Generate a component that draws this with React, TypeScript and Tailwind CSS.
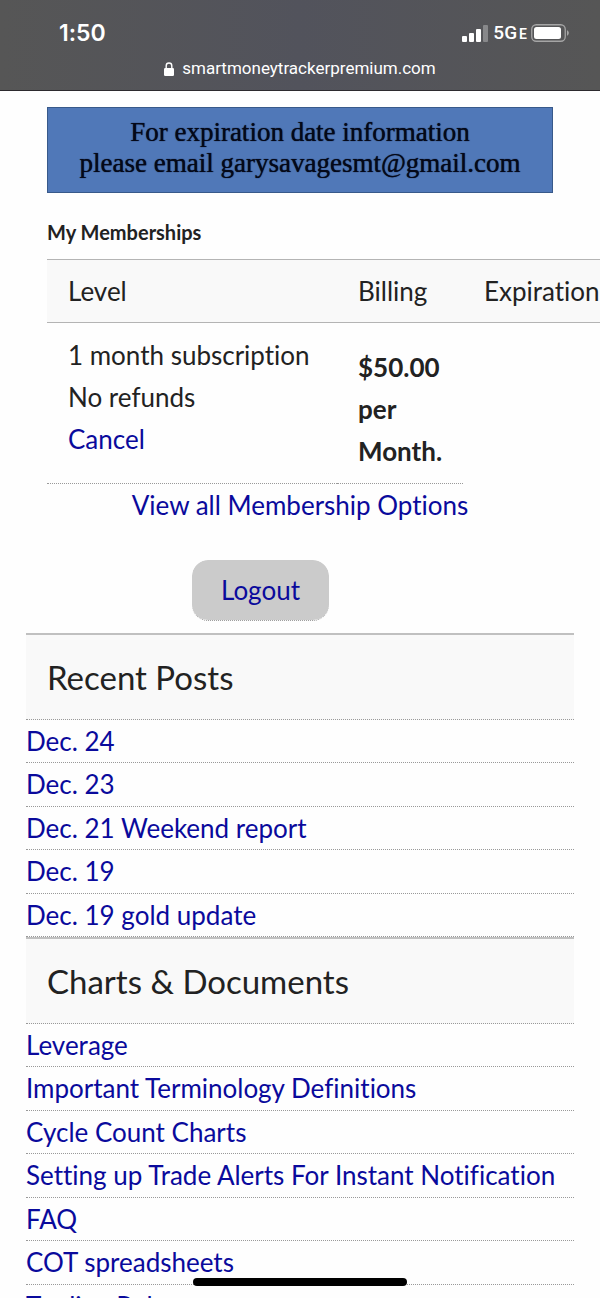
const posts = ['Dec. 24', 'Dec. 23', 'Dec. 21 Weekend report', 'Dec. 19', 'Dec. 19 gold update'];

const documents = [
    'Leverage',
    'Important Terminology Definitions',
    'Cycle Count Charts',
    'Setting up Trade Alerts For Instant Notification',
    'FAQ',
    'COT spreadsheets',
    'Trading Rules',
];

function StatusIcons() {
    return (
        <div className="flex items-center gap-1">
            <svg width="27" height="18" viewBox="0 0 27 18" fill="white" aria-hidden="true">
                <rect x="0" y="12" width="5" height="6" rx="1" />
                <rect x="7" y="9" width="5" height="9" rx="1" />
                <rect x="14" y="5" width="5" height="13" rx="1" />
                <rect x="21" y="1" width="5" height="17" rx="1" opacity="0.3" />
            </svg>
            <span className="flex items-baseline gap-0.5 text-[19px] leading-none font-medium [font-family:Roboto,sans-serif]">
                5G<span className="text-sm font-semibold">E</span>
            </span>
            <svg width="38" height="18" viewBox="0 0 38 18" fill="none" aria-hidden="true">
                <rect x="0.75" y="0.75" width="33.5" height="16.5" rx="4.5" stroke="#a5a5a5" strokeWidth="1.3" />
                <rect x="3" y="3" width="27" height="12" rx="2.5" fill="white" />
                <path d="M36 6.3c1.3.6 1.8 1.5 1.8 2.7s-.5 2.1-1.8 2.7z" fill="#a5a5a5" />
            </svg>
        </div>
    );
}

function BrowserBar() {
    return (
        <header className="shrink-0 border-b border-[#2c2a2e] bg-linear-to-r from-[#565656] via-[#52535c] to-[#565656] pb-1 text-white">
            <div className="flex items-center justify-between pt-[15px] pr-[31px] pl-[59px]">
                <time className="text-[23px] leading-9 font-semibold [font-family:Inter,sans-serif]">1:50</time>
                <StatusIcons />
            </div>
            <div className="flex items-center justify-center gap-2 text-[17px] leading-[35px] [font-family:Roboto,sans-serif]">
                <svg width="10" height="14" viewBox="0 0 10 14" aria-hidden="true">
                    <rect x="0" y="6" width="10" height="8" rx="1.2" fill="white" />
                    <path d="M2.2 7V3.8a2.8 2.8 0 0 1 5.6 0V7" fill="none" stroke="white" strokeWidth="1.4" />
                </svg>
                <span>smartmoneytrackerpremium.com</span>
            </div>
        </header>
    );
}

function Memberships() {
    return (
        <table className="w-[672px] table-fixed border-separate border-spacing-0 text-left">
            <thead>
                <tr className="h-16 bg-[#f9f9f9] *:border-y *:border-[#b4b4b4] *:px-[21px] *:font-normal">
                    <th className="w-[290px]">Level</th>
                    <th className="w-[126px]">Billing</th>
                    <th>Expiration</th>
                </tr>
            </thead>
            <tbody>
                <tr className="align-top leading-[42px]">
                    <td className="border-b border-dotted border-[#999] px-[21px] pt-[11px]">
                        1 month subscription
                        <br />
                        No refunds
                        <br />
                        <a href="#cancel" className="text-[#0a0a9c]">
                            Cancel
                        </a>
                    </td>
                    <td className="border-b border-dotted border-[#999] px-[21px] pt-[23px] pb-[11px] font-bold">
                        $50.00 per Month.
                    </td>
                    <td></td>
                </tr>
            </tbody>
        </table>
    );
}

function LinkSection({ title, items }: { title: string; items: string[] }) {
    return (
        <section>
            <h2 className="border-t-2 border-b border-t-[#c0c0c0] border-b-[#999] bg-[#f9f9f9] px-[21px] text-[33px] leading-[84px] [border-bottom-style:dotted]">
                {title}
            </h2>
            <ul>
                {items.map((item) => (
                    <li
                        key={item}
                        className="flex items-center border-b border-dotted border-[#999] odd:h-[43px] even:h-11"
                    >
                        <a href="#" className="text-[#0a0a9c]">
                            {item}
                        </a>
                    </li>
                ))}
            </ul>
        </section>
    );
}

export default function App() {
    return (
        <div className="flex h-screen flex-col overflow-hidden bg-[#fefefe] text-[26px] text-[#222] [font-family:Lato,sans-serif] [font-variant-ligatures:none]">
            <BrowserBar />
            <main className="flex-1 overflow-x-hidden overflow-y-auto pt-4 [scrollbar-width:none]">
                <div className="px-[47px]">
                    <div className="border border-[#38598a] bg-[#5078b8] pt-[9px] pb-[13px] text-center text-[27px] leading-[31px] text-[#040818] [font-family:'Liberation_Serif',serif] [text-shadow:0_0_1px_#040818]">
                        <p>For expiration date information</p>
                        <p>please email garysavagesmt@gmail.com</p>
                    </div>
                    <h3 className="pt-7 pb-4 text-xl leading-[22px] font-bold">My Memberships</h3>
                    <Memberships />
                    <p className="text-center leading-[42px]">
                        <a href="#levels" className="text-[#0a0a9c]">
                            View all Membership Options
                        </a>
                    </p>
                </div>
                <div className="flex px-[192px] pt-[34px] pb-3">
                    <button className="rounded-2xl border-b border-dotted border-[#999] bg-[#cbcbcb] bg-clip-padding px-[29px] leading-[60px] text-[#0a0a9c]">
                        Logout
                    </button>
                </div>
                <div className="px-[26px]">
                    <LinkSection title="Recent Posts" items={posts} />
                    <LinkSection title="Charts & Documents" items={documents} />
                </div>
            </main>
            <div className="fixed bottom-3 left-1/2 h-2 w-[214px] -translate-x-1/2 rounded-full bg-black"></div>
        </div>
    );
}
